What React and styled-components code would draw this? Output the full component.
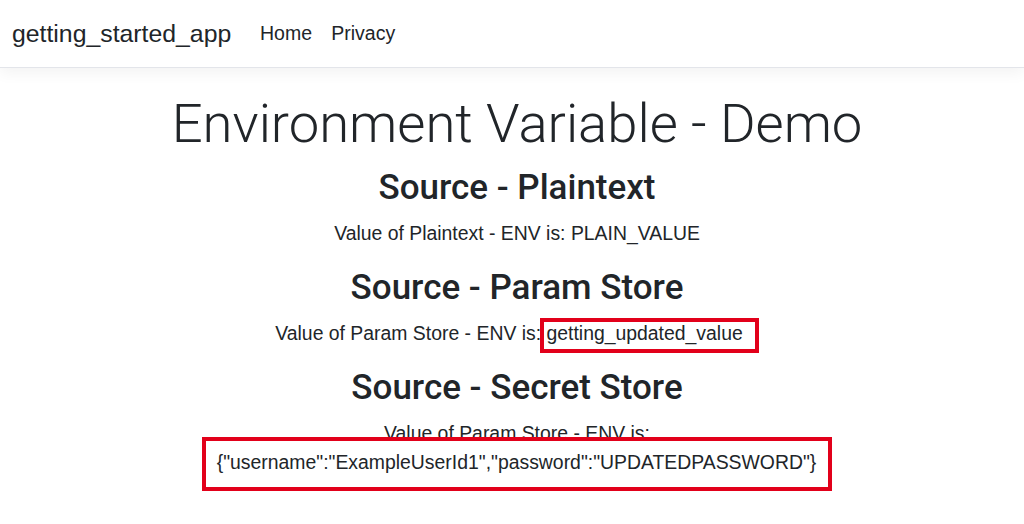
import React from "react";
import styled, { createGlobalStyle } from "styled-components";

const Global = createGlobalStyle`
  html, body { margin: 0; padding: 0; background: #fff; }
  body {
    font-family: "Liberation Sans", Arial, sans-serif;
    color: #212529;
    font-size: 19.4px;
    line-height: 1.5;
  }
  * { box-sizing: border-box; }
`;

const NavBar = styled.header`
  height: 68px;
  display: flex;
  align-items: center;
  padding: 0 12px;
  background: #fff;
  border-bottom: 1px solid #e3e5ea;
  box-shadow: 0 5px 14px rgba(0, 0, 0, 0.05);
`;

const Brand = styled.a`
  font-size: 24.8px;
  line-height: 1.5;
  color: #212529;
  text-decoration: none;
  margin-right: 19.2px;
`;

const NavList = styled.nav`
  display: flex;
  align-items: center;
`;

const NavLink = styled.a`
  font-size: 19.5px;
  color: #212529;
  text-decoration: none;
  padding: 0 9.6px;
`;

const Main = styled.main`
  text-align: center;
  padding: 23px 0 0 10px;
`;

const Title = styled.h1`
  font-family: Roboto, "Liberation Sans", sans-serif;
  font-weight: 300;
  font-size: 54.4px;
  line-height: 1.2;
  margin: 0 0 11px;
`;

const SectionTitle = styled.h2`
  font-family: Roboto, "Liberation Sans", sans-serif;
  font-weight: 500;
  font-size: 35px;
  line-height: 1.2;
  margin: 0 0 9.6px;
`;

const Text = styled.p`
  margin: 0 0 19.2px;
  line-height: 1.5;
`;

const Marked = styled.span`
  border: 4px solid #e2001a;
  background: #fff;
  padding: ${(p) => (p.$tall ? "9.6px 12px 14.6px 11px" : "0 12px 5px 2px")};
  margin-left: ${(p) => (p.$tall ? "0" : "-6px")};
`;

export default function App() {
  return (
    <>
      <Global />
      <NavBar>
        <Brand href="#">getting_started_app</Brand>
        <NavList>
          <NavLink href="#">Home</NavLink>
          <NavLink href="#">Privacy</NavLink>
        </NavList>
      </NavBar>
      <Main>
        <Title>Environment Variable - Demo</Title>
        <SectionTitle>Source - Plaintext</SectionTitle>
        <Text>Value of Plaintext - ENV is: PLAIN_VALUE</Text>
        <SectionTitle>Source - Param Store</SectionTitle>
        <Text>
          Value of Param Store - ENV is: <Marked>getting_updated_value</Marked>
        </Text>
        <SectionTitle>Source - Secret Store</SectionTitle>
        <Text>
          Value of Param Store - ENV is:
          <br />
          <Marked $tall>
            {'{"username":"ExampleUserId1","password":"UPDATEDPASSWORD"}'}
          </Marked>
        </Text>
      </Main>
    </>
  );
}
